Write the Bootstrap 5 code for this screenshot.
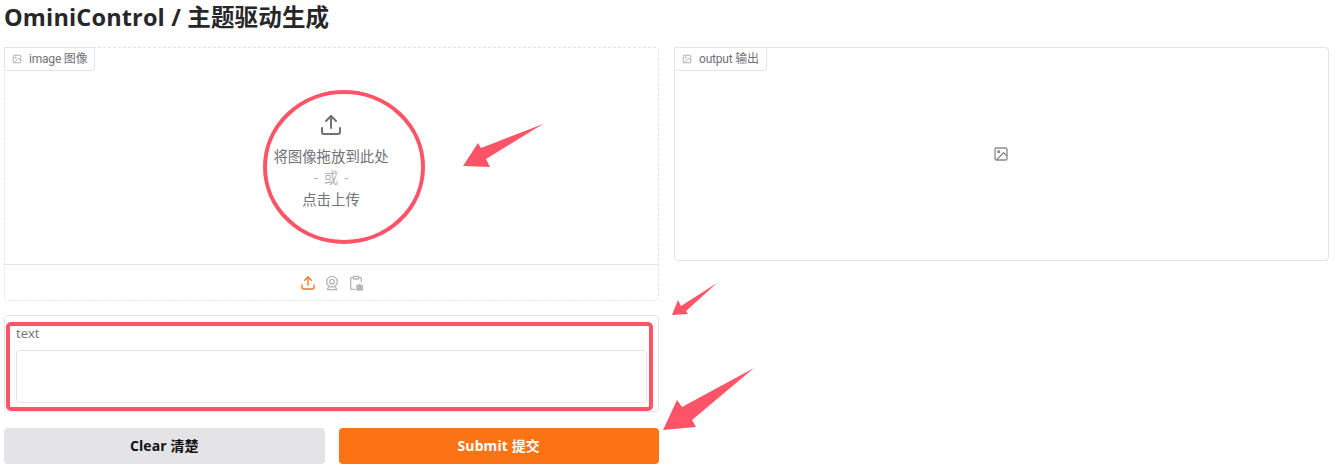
<!DOCTYPE html>
<html lang="zh">
<head>
    <meta charset="UTF-8">
    <meta name="viewport" content="width=device-width, initial-scale=1">
    <title>OminiControl / 主题驱动生成</title>
    <link href="https://cdn.jsdelivr.net/npm/bootstrap@5.3.2/dist/css/bootstrap.min.css" rel="stylesheet">
    <style>
        body {
            background: #fff;
            font-family: "Open Sans", "Noto Sans CJK SC", sans-serif;
            color: #71717a;
            overflow: hidden;
        }
        .app-wrap { padding: 0 7px 0 4px; height: 466px; }
        .app-title {
            font-family: "Open Sans", "Noto Sans CJK SC", sans-serif;
            font-size: 23.5px;
            font-weight: 700;
            letter-spacing: .15px;
            line-height: 35px;
            color: #27272a;
            margin: 0 0 12px;
        }
        .cols { gap: 15px; }
        .side { width: 655px; }
        .panel { border: 1px solid #e4e4e7; border-radius: 4px; background: #fff; }
        .panel-dash { border-style: dashed; height: 254px; }
        .panel-out { height: 214px; }
        .tag {
            top: -1px;
            left: -1px;
            height: 24px;
            padding: 0 7px 0 7px;
            gap: 7px;
            border: 1px solid #e4e4e7;
            border-radius: 0 0 4px 0;
            font-family: Roboto, "Noto Sans CJK SC", sans-serif;
            font-size: 12px;
            letter-spacing: -.2px;
            background: #fff;
        }
        .tag svg { width: 10px; height: 10px; color: #a1a1aa; }
        .drop-zone { height: 216px; padding: 65px 1px 0 0; font-size: 14.4px; line-height: 22px; }
        .drop-zone svg { width: 24px; height: 24px; margin-bottom: 9px; }
        .drop-or { color: #b4b4bb; word-spacing: 2px; line-height: 20px; margin-bottom: 1px; }
        .tool-row { height: 37px; border-top: 1px solid #e4e4e7; gap: 8px; }
        .tool-row svg { width: 16px; height: 16px; color: #b4b4bb; }
        .tool-row svg.on { color: #f97316; }
        .out-empty { height: 100%; padding-right: 1px; }
        .out-empty svg { width: 16px; height: 16px; color: #8b8b94; }
        .text-box { height: 97px; margin-top: 14px; padding: 8px 11px 8px 11px; }
        .text-label { font-size: 13px; line-height: 18px; margin-bottom: 8px; }
        .text-input.form-control {
            height: 53px;
            border: 1px solid #e4e4e7;
            border-radius: 4px;
            box-shadow: none;
            resize: none;
        }
        .btn-row { margin-top: 16px; gap: 14px; }
        .btn-gr {
            flex: 1 1 0;
            height: 36px;
            padding: 0 0 1px;
            border: 0;
            border-radius: 4px;
            font-size: 14px;
            font-weight: 700;
            letter-spacing: .1px;
        }
        .btn-clear, .btn-clear:hover { background: #e4e4e7; color: #111; }
        .btn-go, .btn-go:hover { background: #fb7315; color: #fff; }
        .marks { top: 0; left: 0; pointer-events: none; }
    </style>
</head>
<body>
    <div class="app-wrap position-relative">
        <h1 class="app-title">OminiControl / 主题驱动生成</h1>
        <div class="d-flex cols align-items-start">
            <!-- lewa kolumna -->
            <div class="side">
                <div class="panel panel-dash position-relative">
                    <div class="tag position-absolute d-flex align-items-center">
                        <svg viewBox="0 0 24 24" fill="none" stroke="currentColor" stroke-width="2"><rect x="3" y="3" width="18" height="18" rx="2"/><circle cx="8.5" cy="8.5" r="1.5"/><polyline points="21 15 16 10 5 21"/></svg>
                        <span>image 图像</span>
                    </div>
                    <div class="drop-zone d-flex flex-column align-items-center text-center">
                        <svg viewBox="0 0 24 24" fill="none" stroke="currentColor" stroke-width="2" stroke-linecap="round" stroke-linejoin="round"><path d="M21 15v4a2 2 0 0 1-2 2H5a2 2 0 0 1-2-2v-4"/><polyline points="17 8 12 3 7 8"/><line x1="12" y1="3" x2="12" y2="15"/></svg>
                        <div>将图像拖放到此处</div>
                        <div class="drop-or">- 或 -</div>
                        <div>点击上传</div>
                    </div>
                    <div class="tool-row d-flex justify-content-center align-items-center">
                        <svg class="on" viewBox="0 0 24 24" fill="none" stroke="currentColor" stroke-width="2" stroke-linecap="round" stroke-linejoin="round"><path d="M21 15v4a2 2 0 0 1-2 2H5a2 2 0 0 1-2-2v-4"/><polyline points="17 8 12 3 7 8"/><line x1="12" y1="3" x2="12" y2="15"/></svg>
                        <svg viewBox="0 0 24 24" fill="none" stroke="currentColor" stroke-width="2"><circle cx="12" cy="10" r="8"/><circle cx="12" cy="10" r="3.5"/><path d="M7 18l-2 4h14l-2-4" stroke-linejoin="round"/></svg>
                        <svg viewBox="0 0 24 24" fill="none" stroke="currentColor" stroke-width="2" stroke-linejoin="round"><path d="M8 4H5.500A1.500 1.500 0 0 0 4 5.500V20a1.500 1.500 0 0 0 1.500 1.500H11"/><path d="M16 4h2.500A1.500 1.500 0 0 1 20 5.500V11"/><rect x="8" y="2" width="8" height="4" rx="1"/><path d="M13 15.500h2l1-1.500h2.500l1 1.500h2.500V23h-9z" fill="currentColor" stroke-width="1"/></svg>
                    </div>
                </div>
                <div class="panel text-box">
                    <div class="text-label">text</div>
                    <textarea class="form-control text-input"></textarea>
                </div>
                <div class="d-flex btn-row">
                    <button type="button" class="btn btn-gr btn-clear">Clear 清楚</button>
                    <button type="button" class="btn btn-gr btn-go">Submit 提交</button>
                </div>
            </div>
            <!-- prawa kolumna -->
            <div class="side">
                <div class="panel panel-out position-relative">
                    <div class="tag position-absolute d-flex align-items-center">
                        <svg viewBox="0 0 24 24" fill="none" stroke="currentColor" stroke-width="2"><rect x="3" y="3" width="18" height="18" rx="2"/><circle cx="8.5" cy="8.5" r="1.5"/><polyline points="21 15 16 10 5 21"/></svg>
                        <span>output 输出</span>
                    </div>
                    <div class="out-empty d-flex justify-content-center align-items-center">
                        <svg viewBox="0 0 24 24" fill="none" stroke="currentColor" stroke-width="2"><rect x="3" y="3" width="18" height="18" rx="2"/><circle cx="8.5" cy="8.5" r="1.5"/><polyline points="21 15 16 10 5 21"/></svg>
                    </div>
                </div>
            </div>
        </div>
        <!-- czerwone adnotacje na zrzucie -->
        <svg class="marks position-absolute" width="1336" height="466" viewBox="0 0 1336 466">
            <ellipse cx="344" cy="167" rx="79" ry="75" fill="none" stroke="#ff5468" stroke-width="4"/>
            <rect x="8" y="324" width="643" height="85" rx="3" fill="none" stroke="#ff5468" stroke-width="4"/>
            <polygon fill="#ff5468" points="463,166 478,143 481,148 543,124 486,159 490,167"/>
            <polygon fill="#ff5468" points="672,315 678,300 681,306 717,283 686,311 688,314"/>
            <polygon fill="#ff5468" points="663,430 677,400 682,407 754,368 692,420 696,427"/>
        </svg>
    </div>

    <script src="https://cdn.jsdelivr.net/npm/bootstrap@5.3.2/dist/js/bootstrap.bundle.min.js"></script>
</body>
</html>
